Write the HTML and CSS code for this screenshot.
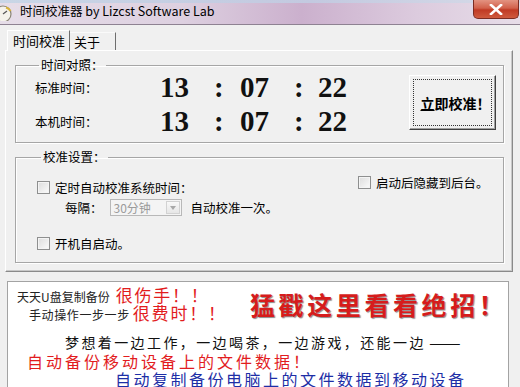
FILE: index.html
```html
<!DOCTYPE html>
<html lang="zh-CN">
<head>
  <meta charset="UTF-8">
  <title>时间校准器 by Lizcst Software Lab</title>
  <link rel="stylesheet" href="styles.css">
</head>
<body>
  <div class="titlebar">
    <svg class="app-icon" width="13" height="18" viewBox="0 0 13 18">
      <circle cx="3" cy="11" r="8" fill="#f4f2ea" stroke="#8a8576" stroke-width="1.2"/>
      <path d="M6 4.5 A8 8 0 0 1 10.6 8" fill="none" stroke="#d8b23a" stroke-width="2"/>
      <path d="M3 11 L7 8" stroke="#555" stroke-width="1.2"/>
    </svg>
    <span class="title">时间校准器 by Lizcst Software Lab</span>
    <div class="close">
      <svg width="14" height="11" viewBox="0 0 14 11">
        <path d="M2 1 L12 10 M12 1 L2 10" stroke="#fff" stroke-width="2.6" stroke-linecap="square"/>
      </svg>
    </div>
  </div>

  <div class="tabs">
    <span class="tab active">时间校准</span>
    <span class="tab">关于</span>
  </div>

  <div class="panel">
    <fieldset class="group compare">
      <legend>时间对照&#xFF1A;</legend>
      <div class="clock">
        <span class="label">标准时间&#xFF1A;</span>
        <span class="digits">13</span><span class="colon">:</span>
        <span class="digits">07</span><span class="colon">:</span>
        <span class="digits">22</span>
        <span class="label">本机时间&#xFF1A;</span>
        <span class="digits">13</span><span class="colon">:</span>
        <span class="digits">07</span><span class="colon">:</span>
        <span class="digits">22</span>
      </div>
      <button class="sync"><span class="focus"><u>立</u>即校准&#xFF01;</span></button>
    </fieldset>

    <fieldset class="group settings">
      <legend>校准设置&#xFF1A;</legend>
      <div class="options">
        <div class="col-left">
          <label class="option"><span class="check"></span>定时自动校准系统时间&#xFF1A;</label>
          <div class="interval">
            <span>每隔&#xFF1A;</span>
            <span class="select">30分钟<span class="arrow"></span></span>
            <span>自动校准一次。</span>
          </div>
          <label class="option startup"><span class="check"></span>开机自启动。</label>
        </div>
        <label class="option hide"><span class="check"></span>启动后隐藏到后台。</label>
      </div>
    </fieldset>
  </div>

  <div class="banner">
    <div class="promo-top">
      <div class="pains">
        <p class="pain"><span class="small">天天U盘复制备份</span><span class="hurt">很伤手&#xFF01;&#xFF01;</span></p>
        <p class="pain second"><span class="small">手动操作一步一步</span><span class="hurt">很费时&#xFF01;&#xFF01;</span></p>
      </div>
      <p class="cta">猛戳这里看看绝招&#xFF01;</p>
    </div>
    <p class="dream">梦想着一边工作&#xFF0C;一边喝茶&#xFF0C;一边游戏&#xFF0C;还能一边<span class="dash">——</span></p>
    <p class="feature red">自动备份移动设备上的文件数据&#xFF01;</p>
    <p class="feature blue">自动复制备份电脑上的文件数据到移动设备</p>
  </div>
</body>
</html>
```

FILE: styles.css
```css
* { box-sizing: border-box; }
body { margin: 0; width: 520px; height: 387px; overflow: hidden; background: #f0f0f0; color: #000; font-family: "Noto Sans CJK SC", "Noto Sans", sans-serif; font-size: 12px; }
p { margin: 0; }

/* window caption */
.titlebar { position: relative; display: flex; align-items: center; height: 25px; border-bottom: 1px solid #8e8292; background: linear-gradient(90deg, #e6dde8 0%, #ddd0e0 35%, #cbb0cd 58%, #dccbde 80%, #e7dde8 100%); }
.titlebar::before { content: ""; position: absolute; left: 0; right: 0; top: 0; height: 3px; background: linear-gradient(90deg, #c9d6e6, #c3c9e0 60%, #d7dbe8); }
.app-icon { position: relative; margin-right: 7px; }
.title { position: relative; font-size: 12.5px; line-height: 16px; margin-top: -3px; }
.close { position: absolute; top: 0; right: 1px; width: 46px; height: 19px; display: flex; align-items: center; justify-content: center; border: 1px solid #7b2c22; border-top: 0; border-radius: 0 0 5px 5px; background: linear-gradient(#e39381, #d2614b 45%, #c03a24 55%, #cf5a3e); }

/* tabs */
.tabs { display: flex; align-items: flex-end; height: 25px; padding-left: 7px; }
.tab { height: 18px; line-height: 17px; padding: 0 4px 0 4px; border-top: 1px solid #fff; border-right: 1px solid #6e6e6e; font-size: 13px; }
.tab.active { height: 21px; line-height: 19px; padding: 0 4px 0 5px; border-left: 1px solid #fff; margin-bottom: -1px; position: relative; background: #f0f0f0; }
.tab:last-child { width: 46px; border-top-color: #fafafa; }

/* tab page */
.panel { height: 222px; margin: 0 7px 0 5px; padding: 6px 8px 0 9px; border: 1px solid; border-color: #fff #8a8a8a #8a8a8a #fff; box-shadow: inset -1px -1px #c8c8c8; }
.group { margin: 0; border: 1px solid #a6a6a6; box-shadow: 1px 1px #fff, inset 1px 1px #fff; }
.group legend { padding: 0 2px; margin-left: 4px; line-height: 16px; font-size: 12.5px; }
.compare { display: flex; height: 86px; padding: 0 7px 0 19px; }
.settings { height: 114px; margin-top: 6px; padding: 0 8px 0 21px; }

.clock { display: grid; grid-template-columns: 125px 52px 28px 52px 26px 60px; grid-auto-rows: 34px; align-items: center; margin-top: -3px; }
.label { font-size: 12.5px; }
.digits, .colon { font-family: "Liberation Serif", "DejaVu Serif", serif; font-weight: bold; font-size: 29px; line-height: 34px; color: #111; }
.colon { padding-left: 2px; }

.sync { width: 87px; height: 55px; margin: 2px 0 0 auto; padding: 3px; background: #f0f0f0; border: 1px solid; border-color: #fff #404040 #404040 #fff; box-shadow: inset -1px -1px #a0a0a0; font-family: inherit; font-size: 14px; font-weight: bold; color: #000; }
.sync .focus { display: flex; align-items: center; justify-content: center; height: 100%; padding-left: 6px; border: 1px dotted #333; }

/* settings */
.options { display: flex; }
.col-left { width: 321px; padding-top: 12px; }
.option { display: flex; align-items: center; gap: 5px; height: 20px; font-size: 12.5px; }
.check { width: 13px; height: 13px; border: 1px solid #8e8f8f; background: linear-gradient(135deg, #dcdcdc, #fbfbfb); box-shadow: inset 0 0 0 1px #f4f4f4; }
.interval { display: flex; align-items: center; height: 20px; padding-left: 28px; font-size: 12.5px; }
.select { position: relative; width: 72px; height: 17px; margin: 0 9px 0 7px; padding-left: 3px; line-height: 15px; border: 1px solid #b8b8b8; background: #f4f4f4; color: #9b9b9b; font-size: 12px; }
.arrow { position: absolute; top: 1px; right: 1px; width: 14px; height: 13px; border: 1px solid #d2d2d2; background: linear-gradient(#f8f8f8, #e6e6e6); }
.arrow::after { content: ""; position: absolute; left: 3px; top: 4px; border: 3px solid transparent; border-top: 4px solid #a8a8a8; }
.startup { margin-top: 16px; }
.hide { margin-top: 7px; }

/* advert banner */
.banner { height: 120px; margin: 9px 11px 0 7px; padding: 4px 0 0 9px; border: 1px solid #a3a3a3; background: #fff; }
.promo-top { display: grid; grid-template-columns: 233px 1fr; align-items: center; }
.pain { display: flex; align-items: baseline; height: 18px; line-height: 18px; white-space: nowrap; }
.pain.second { padding-left: 12px; }
.small { font-size: 12px; color: #222; }
.pain.second .small { letter-spacing: 0.6px; }
.hurt { margin-left: 6px; font-size: 17px; letter-spacing: 1.8px; color: #e21c1e; }
.pain.second .hurt { margin-left: 3px; }
.cta { font-size: 25px; font-weight: bold; letter-spacing: 3.6px; color: #d61c1c; text-shadow: 1px 1px 1px #8a8a8a; white-space: nowrap; line-height: 30px; }
.dream { margin-top: 10px; padding-left: 48px; font-size: 14px; letter-spacing: 2.4px; line-height: 20px; color: #111; white-space: nowrap; }
.dream .dash { display: inline-block; letter-spacing: 0; margin-left: 3px; transform: scaleX(1.35); transform-origin: left center; }
.feature { font-size: 16px; letter-spacing: 2.3px; line-height: 18px; white-space: nowrap; }
.feature.red { padding-left: 19px; margin-left: -9px; color: #e21c1e; letter-spacing: 3px; }
.feature.blue { padding-left: 98px; color: #1d2ea6; letter-spacing: 2.5px; }
```
